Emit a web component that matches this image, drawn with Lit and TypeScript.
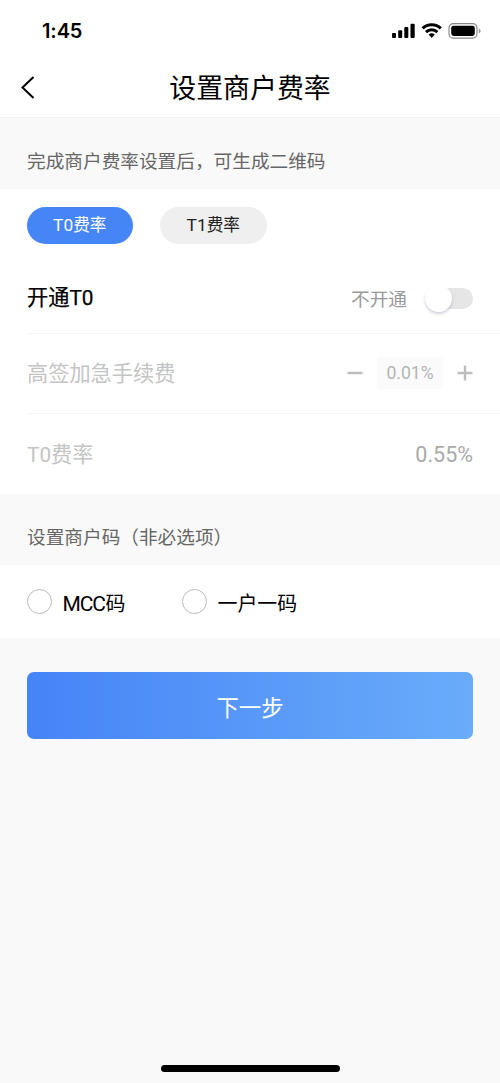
import { LitElement, html, css } from "lit";
import { customElement, state } from "lit/decorators.js";

@customElement("app-root")
export class AppRoot extends LitElement {
  @state() private tab = 0;
  @state() private code = -1;

  static styles = css`
    :host {
      display: flex;
      flex-direction: column;
      width: 500px;
      height: 1083px;
      box-sizing: border-box;
      overflow: hidden;
      background: #f9f9f9;
      color: #000;
      font-family: "Noto Sans CJK SC", sans-serif;
    }
    * { box-sizing: border-box; }
    .status {
      display: flex;
      align-items: center;
      height: 58px;
      padding: 3px 19px 0 42px;
      background: #fff;
    }
    .clock {
      flex: 1;
      font: 600 20px/24px Inter, sans-serif;
      letter-spacing: -0.1px;
    }
    .nav {
      display: grid;
      grid-template-columns: 60px 1fr 60px;
      align-items: center;
      height: 60px;
      background: #fff;
      border-bottom: 1px solid #f1f1f1;
    }
    .back { display: block; margin-left: 20px; }
    .title { padding-bottom: 2px; text-align: center; font-size: 26.9px; line-height: 40px; }
    .caption {
      display: flex;
      align-items: center;
      height: 71px;
      padding: 13px 27px 0;
      font-size: 18.67px;
      line-height: 28px;
      color: #666;
    }
    .card { background: #fff; }
    .tabs { display: flex; gap: 27px; padding: 18px 27px 18px 26.5px; }
    .pill {
      display: flex;
      align-items: center;
      justify-content: center;
      width: 106.5px;
      height: 37px;
      padding-bottom: 3px;
      border-radius: 19px;
      background: #efefef;
      color: #222;
      font-size: 16.67px;
      line-height: 24px;
    }
    .pill.on { background: #4585f5; color: #fff; }
    .latin { font-family: Roboto, sans-serif; font-size: 1.04em; line-height: 1; }
    .row {
      display: flex;
      align-items: center;
      justify-content: space-between;
      height: 80px;
      margin-left: 27px;
      padding-right: 27px;
      border-bottom: 1px solid #f5f5f5;
      font-size: 21.33px;
      line-height: 32px;
      color: #c4c4c4;
    }
    .row.first { height: 72px; color: #000; }
    .row.last { border-bottom: none; }
    .label { padding-bottom: 3px; font-size: 21.2px; }
    .label .latin { font-size: 0.98em; }
    .strong { -webkit-text-stroke: 0.25px #000; padding-bottom: 4px; }
    .state { display: flex; align-items: center; gap: 18px; color: #999; font-size: 18.67px; }
    .switch {
      display: flex;
      align-items: center;
      width: 48px;
      height: 21px;
      margin-top: 1px;
      border-radius: 11px;
      background: linear-gradient(90deg, #fff 12px, #e6e6e6 12px);
    }
    .knob {
      width: 27px;
      height: 27px;
      flex: none;
      border-radius: 50%;
      background: #fff;
      box-shadow: 0 2px 3px rgba(120, 120, 160, 0.35);
    }
    .stepper { display: flex; align-items: center; gap: 14px; padding-bottom: 1px; }
    .amount {
      width: 66px;
      height: 32px;
      background: #fafafa;
      text-align: center;
      font: 17.6px/33px Roboto, sans-serif;
      color: #b4b4b4;
    }
    .rate { padding-top: 1px; font: 21.5px/32px Roboto, sans-serif; color: #aaa; }
    .options { display: flex; height: 73px; padding: 0 27px; }
    .option {
      display: flex;
      align-items: center;
      gap: 10.5px;
      width: 155px;
      font-size: 19.9px;
      line-height: 30px;
      white-space: nowrap;
    }
    .option .text { padding-top: 2px; }
    .option .latin { font-size: 21px; letter-spacing: -1.1px; margin-right: 0.5px; }
    .ring { width: 25px; height: 25px; flex: none; border: 1.3px solid #bbb; border-radius: 50%; background: #fff; }
    .ring.on { border: 7px solid #4585f5; }
    .next {
      display: flex;
      align-items: center;
      justify-content: center;
      height: 67px;
      margin: 34px 27px 0;
      border-radius: 7px;
      background: linear-gradient(90deg, #4584f7, #6aacfa);
      color: #fff;
      font-size: 22.4px;
      line-height: 34px;
    }
    .home { width: 179px; height: 7px; margin: auto auto 11px; border-radius: 4px; background: #000; }
  `;

  render() {
    return html`
      <div class="status">
        <div class="clock">1:45</div>
        <svg width="90" height="20" viewBox="0 0 90 20">
          <rect x="1" y="12" width="4" height="5" rx="1" />
          <rect x="7.2" y="9.3" width="4" height="7.7" rx="1" />
          <rect x="13.3" y="6" width="4" height="11" rx="1" />
          <rect x="19.5" y="2.7" width="4.2" height="14.3" rx="1" />
          <g fill="none" stroke="#000" stroke-width="2.9">
            <path d="M31.6 7.4a13 13 0 0 1 18.2 0" />
            <path d="M35 11.1a8.2 8.2 0 0 1 11.4 0" />
          </g>
          <path d="M37.6 13.6a4.5 4.5 0 0 1 6.2 0L40.7 17z" />
          <rect x="58" y="2.6" width="28" height="14.5" rx="4.4" fill="none" stroke="#888" stroke-width="1.2" />
          <rect x="60.2" y="4.8" width="23.6" height="10.1" rx="2.4" />
          <path d="M87.8 7.5c2.4.8 2.4 4 0 4.8z" fill="#999" />
        </svg>
      </div>
      <div class="nav">
        <svg class="back" width="16" height="24" viewBox="0 0 16 24" fill="none" stroke="#000" stroke-width="2">
          <path d="M13.5 1L2.5 11.5l11 10.5" />
        </svg>
        <div class="title">设置商户费率</div>
      </div>
      <div class="caption">完成商户费率设置后，可生成二维码</div>
      <div class="card">
        <div class="tabs">
          ${["T0", "T1"].map((name, i) => html`
            <div class="pill ${this.tab === i ? "on" : ""}" @click=${() => (this.tab = i)}><div><span class="latin">${name}</span>费率</div></div>`)}
        </div>
        <div class="row first">
          <span class="label strong">开通<span class="latin">T0</span></span>
          <div class="state"><span>不开通</span><div class="switch"><div class="knob"></div></div></div>
        </div>
        <div class="row">
          <span class="label">高签加急手续费</span>
          <div class="stepper">
            <svg width="16" height="16" viewBox="0 0 16 16" stroke="#bdbdbd" stroke-width="2.4"><path d="M.5 8h15" /></svg>
            <div class="amount">0.01%</div>
            <svg width="16" height="16" viewBox="0 0 16 16" stroke="#bdbdbd" stroke-width="2.4"><path d="M.5 8h15M8 .5v15" /></svg>
          </div>
        </div>
        <div class="row last">
          <span class="label"><span class="latin">T0</span>费率</span>
          <span class="rate">0.55%</span>
        </div>
      </div>
      <div class="caption">设置商户码（非必选项）</div>
      <div class="card options">
        ${[["MCC", "码"], ["", "一户一码"]].map(([latin, text], i) => html`
          <div class="option" @click=${() => (this.code = i)}>
            <div class="ring ${this.code === i ? "on" : ""}"></div>
            <div class="text">${latin ? html`<span class="latin">${latin}</span>` : ""}${text}</div>
          </div>`)}
      </div>
      <div class="next">下一步</div>
      <div class="home"></div>
    `;
  }
}
